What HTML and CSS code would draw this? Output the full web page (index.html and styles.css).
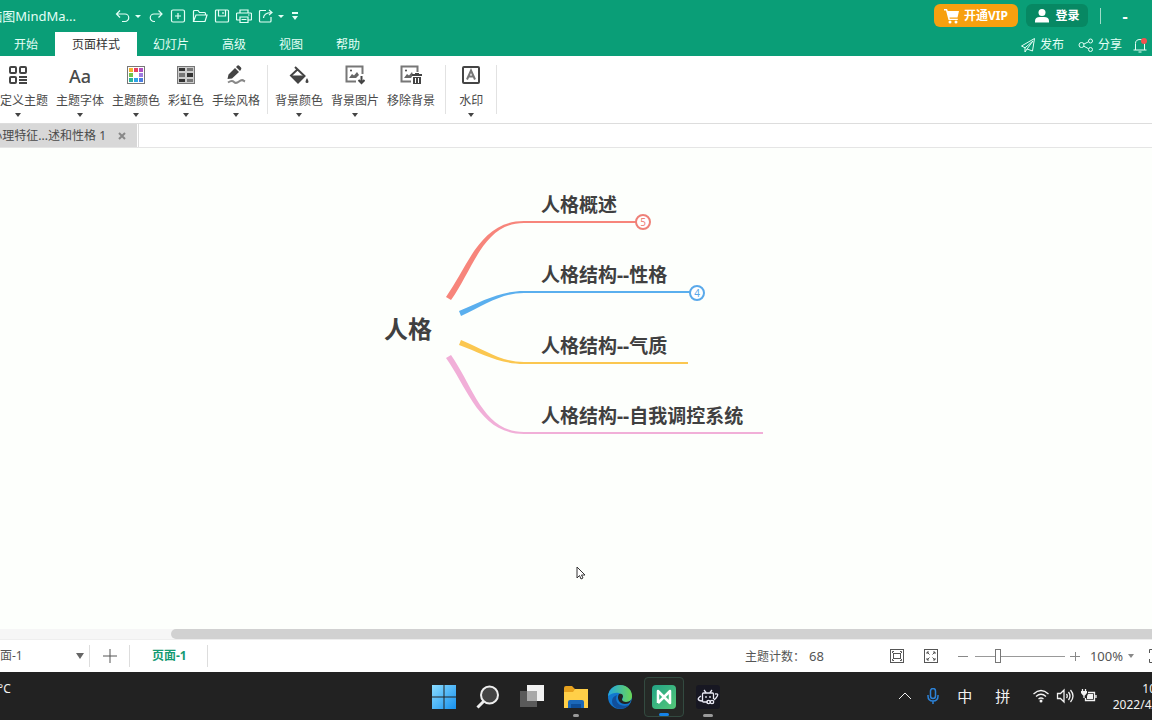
FILE: index.html
```html
<!DOCTYPE html>
<html lang="zh-CN">
<head>
<meta charset="utf-8">
<title>MindMaster</title>
<link rel="stylesheet" href="styles.css">
</head>
<body>
<header class="header">
  <div class="titlebar">
    <div class="app-title"><span>脑图MindMa...</span></div>
    <div class="quick">
      <button aria-label="撤销"><svg class="i16" viewBox="0 0 16 16"><path d="M5 2.500 1.500 6 5 9.500M1.500 6H10a3.500 3.500 0 0 1 0 7.500H7"/></svg></button>
      <button class="drop" aria-label="撤销列表"><svg class="caret" viewBox="0 0 8 8"><path d="M1 3h6L4 6z"/></svg></button>
      <button aria-label="重做"><svg class="i16" viewBox="0 0 16 16"><path d="M10.500 2.500 14 6l-3.500 3.500M14 6H6a3.500 3.500 0 0 0 0 7.500h1"/></svg></button>
      <button aria-label="新建"><svg class="i16" viewBox="0 0 16 16"><rect x="1.500" y="2" width="13" height="12" rx="1.500"/><path d="M8 5v6M5 8h6"/></svg></button>
      <button aria-label="打开"><svg class="i16" viewBox="0 0 16 16"><path d="M1.500 13.500v-10q0-1 1-1h3.500l1.500 2h5q1 0 1 1V7M1.500 13.500 4 7h11l-2 6.500z"/></svg></button>
      <button aria-label="保存"><svg class="i16" viewBox="0 0 16 16"><rect x="1.500" y="2" width="13" height="12" rx="1"/><path d="M4.500 2v6h7V2M9 4v2"/></svg></button>
      <button aria-label="打印"><svg class="i16" viewBox="0 0 16 16"><path d="M4 5V2h8v3M4 12H1.500q-1 0-1-1V6q0-1 1-1h13q1 0 1 1v5q0 1-1 1H12M4 9h8v5.500H4zM5.500 11.500h5M12 7h1.500"/></svg></button>
      <button aria-label="导出"><svg class="i16" viewBox="0 0 16 16"><path d="M8 2.500H2.500q-1 0-1 1v9.500q0 1 1 1H12q1 0 1-1V9M5.500 10q0-5 8-5.500M11 2l3 2.500L11 7"/></svg></button>
      <button class="drop" aria-label="导出列表"><svg class="caret" viewBox="0 0 8 8"><path d="M1 3h6L4 6z"/></svg></button>
      <button aria-label="更多"><svg class="caret" viewBox="0 0 8 8"><path d="M1 0h6v2H1zM1 4h6L4 8z"/></svg></button>
    </div>
    <div class="account">
      <button class="vip"><svg class="i16 solid" viewBox="0 0 16 16"><path d="M0 1h3l.8 2H15l-1.500 6.500H5.500l.3 1.200h8V12H4.500L2 2.500H0z"/><circle cx="6" cy="14" r="1.500"/><circle cx="12" cy="14" r="1.500"/></svg>开通VIP</button>
      <button class="login"><svg class="i16 solid" viewBox="0 0 16 16"><circle cx="8" cy="4.500" r="3.500"/><path d="M1 14.500V13q0-4 5-4h4q5 0 5 4v1.500z"/></svg>登录</button>
      <span class="bar"></span>
      <button class="min" aria-label="最小化">-</button>
    </div>
  </div>
  <div class="menubar">
    <nav class="menu">
      <button>开始</button><button class="active">页面样式</button><button>幻灯片</button><button>高级</button><button>视图</button><button>帮助</button>
    </nav>
    <div class="share">
      <button><svg class="i16" viewBox="0 0 16 16"><path d="M14.500 1.500 1.500 9l3.500 1.800L13 4 7 12l5.500 2zM5 10.800V15l2-3"/></svg>发布</button>
      <button><svg class="i16" viewBox="0 0 16 16"><circle cx="3.500" cy="8" r="2.500"/><circle cx="12.500" cy="4" r="2"/><circle cx="12.500" cy="12.500" r="2"/><path d="m6 7 4.500-2.200M6 9.300l4.500 2.400"/></svg>分享</button>
      <button class="bell" aria-label="通知"><svg class="i16" viewBox="0 0 16 16"><path d="M1.500 13h13M3.500 13V6.500Q3.500 2.500 8 2.500t4.500 4V13M6.500 15h3"/><circle class="dot" cx="12" cy="4" r="3"/></svg></button>
    </div>
  </div>
</header>

<div class="ribbon">
  <div class="group first">
    <button><svg class="i20" viewBox="0 0 20 20"><g class="ln"><rect x="2" y="2" width="6" height="6" rx="1"/><rect x="12" y="2" width="6" height="6" rx="1"/><rect x="2" y="12" width="6" height="6" rx="1"/><path d="M11 12h8M11 15h8M11 18h8"/></g></svg><span>自定义主题</span><svg class="caret" viewBox="0 0 8 8"><path d="M1 2h6L4 6z"/></svg></button>
    <button><b class="aa">Aa</b><span>主题字体</span><svg class="caret" viewBox="0 0 8 8"><path d="M1 2h6L4 6z"/></svg></button>
    <button><svg class="i20" viewBox="0 0 20 20"><rect class="thin" x="1.500" y="1.500" width="17" height="17"/><path fill="#f5b32e" d="M3 3h4v4H3z"/><path fill="#e8415f" d="M8 3h4v4H8z"/><path fill="#b04fc0" d="M13 3h4v4h-4z"/><path fill="#73c34c" d="M3 8h4v4H3z"/><path fill="#9c7ce0" d="M13 8h4v4h-4z"/><path fill="#29b39c" d="M3 13h4v4H3z"/><path fill="#2ea5e8" d="M8 13h4v4H8z"/><path fill="#4a7de0" d="M13 13h4v4h-4z"/></svg><span>主题颜色</span><svg class="caret" viewBox="0 0 8 8"><path d="M1 2h6L4 6z"/></svg></button>
    <button><svg class="i20" viewBox="0 0 20 20"><rect fill="#ccc" x="1" y="1" width="18" height="18"/><rect class="thin" x="1.500" y="1.500" width="17" height="17"/><path fill="#333" d="M3 3h6v3H3zM11 8h6v4h-6zM3 14h6v3H3z"/><path fill="#777" d="M11 3h6v3h-6zM3 8h6v4H3zM11 14h6v3h-6z"/></svg><span>彩虹色</span><svg class="caret" viewBox="0 0 8 8"><path d="M1 2h6L4 6z"/></svg></button>
    <button><svg class="i20" viewBox="0 0 20 20"><path d="m1.500 14 1-4.500L9 3l4 4-7 6.500zM10 2l1.500-1.500q1-.5 2 .5L15 2.500q.8 1 0 2L14 6z"/><path class="wave" d="M2 17.500q4-2.500 6-.5t5-.5 5-.5l1 .5"/></svg><span>手绘风格</span><svg class="caret" viewBox="0 0 8 8"><path d="M1 2h6L4 6z"/></svg></button>
  </div>
  <div class="group">
    <button><svg class="i20" viewBox="0 0 20 20"><path class="ln" d="m6 2 9.500 9L9 17.500 2 10.500 9 4"/><path d="M2 10.500h13.500L9 18zM18 13q3 5 0 5t0-5z"/></svg><span>背景颜色</span><svg class="caret" viewBox="0 0 8 8"><path d="M1 2h6L4 6z"/></svg></button>
    <button><svg class="i20" viewBox="0 0 20 20"><path class="pic" d="M11 16.500H1.500v-15h16V9"/><path fill="#666" d="m4 13 3-4 2 1.500L12 7l2 3-3 3z"/><circle cx="6" cy="5.500" r="1"/><path class="ln" d="M16.500 11v7M13.500 15l3 3 3-3"/></svg><span>背景图片</span><svg class="caret" viewBox="0 0 8 8"><path d="M1 2h6L4 6z"/></svg></button>
    <button><svg class="i22" viewBox="0 0 22 20"><path class="pic" d="M11 16.500H1.500v-15h16V7"/><path fill="#666" d="m4 13 3-4 2 1.500L12 7l1 3-2 3z"/><circle cx="6" cy="5.500" r="1"/><path d="M12 9h3V8h4v1h3v2H12zM13 12h8v7h-8z"/><path stroke="#fff" d="M15.500 13v5M18.500 13v5"/></svg><span>移除背景</span></button>
  </div>
  <div class="group">
    <button class="water"><svg class="i20" viewBox="0 0 20 20"><rect class="ln" x="2" y="2" width="16" height="16" rx="1"/><path class="letter" d="m6 14.500 4-9 4 9M7.500 11.500h5"/></svg><span>水印</span><svg class="caret" viewBox="0 0 8 8"><path d="M1 2h6L4 6z"/></svg></button>
  </div>
</div>

<div class="doctabs">
  <div class="doctab"><span>心理特征...述和性格 1</span><button aria-label="关闭"><svg viewBox="0 0 8 8"><path d="m1 1 6 6M7 1 1 7"/></svg></button></div>
</div>

<main class="canvas">
  <svg class="links" width="800" height="480" viewBox="0 148 800 480">
    <path fill="#f7857b" d="M446 297C468 266 480 221 524 221H636V223H524C483 223 473 270 451 300Z"/>
    <path fill="#5aafee" d="M459 311C481 302 499 291 524 291H690V293H524C501 293 485 305 461 316Z"/>
    <path fill="#fbc750" d="M461 340C485 350 501 362 524 362H688V364H524C499 364 481 353 459 345Z"/>
    <path fill="#f1afd8" d="M451 355C473 386 483 432 524 432H763V434H524C480 434 468 389 446 358Z"/>
  </svg>
  <div class="root">人格</div>
  <div class="topic t1">人格概述</div>
  <div class="topic t2">人格结构--性格</div>
  <div class="topic t3">人格结构--气质</div>
  <div class="topic t4">人格结构--自我调控系统</div>
  <button class="count c1">5</button>
  <button class="count c2">4</button>
  <svg class="cursor" viewBox="0 0 10 14"><path d="M1 1v11l2.500-2.500 1.500 3.500 2-1-1.500-3H9z"/></svg>
</main>
<div class="scroll"><div class="thumb"></div></div>

<div class="status">
  <div class="pages">
    <label class="picker"><select aria-label="页面"><option>页面-1</option></select><svg viewBox="0 0 10 6"><path d="M1 0h8L5 6z"/></svg></label>
    <button class="add" aria-label="添加页面"><svg viewBox="0 0 14 14"><path d="M7 0v14M0 7h14"/></svg></button>
    <button class="page">页面-1</button>
  </div>
  <div class="tools">
    <span class="total">主题计数：<span class="num">68</span></span>
    <button aria-label="适应窗口"><svg class="i16" viewBox="0 0 16 16"><rect x="1.500" y="1.500" width="13" height="13"/><rect x="4.500" y="5.500" width="7" height="5"/><path d="M3.500 5V3.500H5M11 3.500h1.500V5M12.500 11v1.500H11M5 12.500H3.500V11"/></svg></button>
    <button class="full" aria-label="全屏"><svg class="i16" viewBox="0 0 16 16"><rect x="1.500" y="1.500" width="13" height="13"/><path d="m4 4 2.500 2.500M4 6V4h2M12 4 9.500 6.500M10 4h2v2M4 12l2.500-2.500M4 10v2h2M12 12 9.500 9.500M12 10v2h-2"/></svg></button>
    <button class="step" aria-label="缩小"><svg class="i10" viewBox="0 0 10 10"><path d="M0 5.500h10"/></svg></button>
    <input type="range" min="0" max="100" value="24" aria-label="缩放">
    <button class="step" aria-label="放大"><svg class="i10" viewBox="0 0 10 10"><path d="M0 5.500h10M5.500 1v9"/></svg></button>
    <button class="zoom">100%<svg class="caret" viewBox="0 0 8 8"><path d="M1 2h6L4 6z"/></svg></button>
    <button class="cut" aria-label="全屏显示"><svg class="i16" viewBox="0 0 16 16"><path d="M1.500 5V1.500H5M11 1.500h3.500V5M14.500 11v3.500H11M5 14.500H1.500V11M4.500 5v6"/></svg></button>
  </div>
</div>

<footer class="taskbar">
  <div class="weather">°C</div>
  <div class="apps">
    <button aria-label="开始菜单"><svg viewBox="0 0 24 24"><defs><linearGradient id="win" x1="0" y1="0" x2="1" y2="1"><stop offset="0" stop-color="#8adcff"/><stop offset="1" stop-color="#1690ee"/></linearGradient></defs><path fill="url(#win)" d="M0 0h11.500v11.500H0zM12.500 0H24v11.500H12.500zM0 12.500h11.500V24H0zM12.500 12.500H24V24H12.500z"/></svg></button>
    <button aria-label="搜索"><svg viewBox="0 0 24 24"><circle cx="13.500" cy="10" r="8.500" fill="#444" stroke="#eee" stroke-width="2"/><path d="m7.500 16.500-6 6" stroke="#eee" stroke-width="3"/></svg></button>
    <button aria-label="任务视图"><svg viewBox="0 0 24 24"><path fill="#f2f2f2" d="M7 0h17v16H7z"/><path fill="#5a5a5a" d="M0 6h17v16H0z"/><path fill="#a9a9a9" d="M7 6h10v10H7z"/></svg></button>
    <button class="run" aria-label="文件资源管理器"><svg viewBox="0 0 24 24"><path fill="#e6a11e" d="M0 3q0-2 2-2h6l3 3h13v6H0z"/><path fill="#ffcf48" d="M0 7h9l2-3h13v19H0z"/><path fill="#1b68b8" d="M4 23v-6q0-2 2-2h12q2 0 2 2v6z"/><path fill="#0e4d96" d="M7 19h10v4H7z"/></svg></button>
    <button aria-label="Edge"><svg viewBox="0 0 24 24"><defs><linearGradient id="sea" x1="0" y1="0" x2="1" y2="0"><stop offset="0" stop-color="#22a6e2"/><stop offset="1" stop-color="#6bd653"/></linearGradient></defs><circle cx="12" cy="12" r="12" fill="#1277cf"/><path fill="url(#sea)" d="M0 11C1 4 6 0 12 0c8 0 12 6 12 11 0 4-3 6-6 6-4 0-5-2-3-4C15 8 8 5 0 11z"/><path fill="#114f9b" d="M9 10c-3 6 2 13 12 10-5 6-17 5-17-4 0-3 2-5 5-6z"/><path fill="#222" d="M11 9q4-1 4 3c-2 2-1 5 3 5 2 0 4-1 5-2-1 3-3 4-6 4-5 0-9-5-6-10z"/></svg></button>
    <button class="run current" aria-label="MindMaster"><svg viewBox="0 0 24 24"><defs><linearGradient id="mm" x1="0" y1="0" x2="1" y2="1"><stop offset="0" stop-color="#22a386"/><stop offset="1" stop-color="#55c878"/></linearGradient></defs><rect width="24" height="24" rx="4" fill="url(#mm)"/><path fill="none" stroke="#fff" stroke-width="2.500" stroke-linejoin="round" d="M6 18V6l12 12V6L6 18"/></svg></button>
    <button class="run other" aria-label="录屏"><svg viewBox="0 0 24 24"><rect width="24" height="24" rx="3" fill="#171722"/><g fill="none" stroke="#e8e8f4" stroke-width="1.300"><path d="m8 5 2 2.500M16 5l-2 2.500M12 17H7.500q-1 0-1-1V9q0-1 1-1h9q1 0 1 1v5M10 11v2M14 11v2M5 11q-6 4 1 5M19 9q5-1 1 4l-2 2"/><circle cx="12.500" cy="17" r="1.700"/><circle cx="16" cy="17" r="1.700"/></g></svg></button>
  </div>
  <div class="tray">
    <button aria-label="隐藏的图标"><svg class="i16" viewBox="0 0 16 16"><path d="m2 11 6-6 6 6"/></svg></button>
    <button class="mic" aria-label="麦克风"><svg class="i16" viewBox="0 0 16 16"><rect x="5.500" y="0.500" width="5" height="10" rx="2.500"/><path d="M3 7v1q0 5 5 5t5-5V7M8 13v3"/></svg></button>
    <button class="ime">中</button>
    <button class="ime">拼</button>
    <button class="sys" aria-label="网络、音量和电池"><svg class="i16" viewBox="0 0 16 16"><path d="M.5 6q7.500-7 15 0M3 8.500q5-4.500 10 0M5.500 11q2.500-2 5 0"/><circle class="w" cx="8" cy="13" r="1.500"/></svg><svg class="i18" viewBox="0 0 18 16"><path d="M1.500 5.500h3L8 2v12l-3.500-3.500h-3zM10.500 6q1.500 2 0 4M12.500 4q3 4 0 8M14.500 2q5 6 0 12"/></svg><svg class="i16" viewBox="0 0 16 16"><path d="M7 4.500h6.500v8h-9V10M15 7v3M1.500 1v3M4.500 1v3M3 7v3"/><path class="w" d="M0 3h6v2L4 7.500H2L0 5zM7 6h5v5H6V8z"/></svg></button>
    <button class="clock"><span>10</span><span>2022/4/</span></button>
  </div>
</footer>
</body>
</html>
```

FILE: styles.css
```css
* { box-sizing: border-box; }
body {
  margin: 0;
  height: 100vh;
  display: flex;
  flex-direction: column;
  overflow: hidden;
  background: #fff;
  color: #4a4a4a;
  font: 12px/16px "Noto Sans", "Noto Sans CJK SC", sans-serif;
}
button, select {
  border: 0;
  margin: 0;
  padding: 0;
  background: none;
  color: inherit;
  font: inherit;
  white-space: nowrap;
}
button { display: flex; align-items: center; justify-content: center; flex: none; }
svg { display: block; flex: none; }
.i16 { width: 16px; height: 16px; fill: none; stroke: currentColor; }
.i18 { width: 18px; height: 16px; fill: none; stroke: currentColor; }
.i10 { width: 10px; height: 10px; fill: none; stroke: currentColor; }
.i20 { width: 20px; height: 20px; }
.i22 { width: 22px; height: 20px; }
.solid { fill: #fff; stroke: none; }
.caret { width: 8px; height: 8px; fill: currentColor; }

/* header */
.header { background: #0a9e77; color: #e4fff6; }
.titlebar { display: flex; align-items: center; height: 32px; padding-bottom: 1px; }
.app-title { width: 76px; display: flex; justify-content: flex-end; overflow: hidden; font-size: 13px; white-space: nowrap; }
.quick { display: flex; align-items: center; gap: 6px; margin-left: 39px; }
.quick svg { stroke-width: 1.2; }
.quick .drop { margin-left: -3px; }
.account { display: flex; align-items: center; margin-left: auto; padding-right: 23px; color: #fff; font-weight: 700; }
.vip { width: 84px; height: 23px; gap: 4px; border-radius: 6px; background: #f7a00f; }
.login { width: 62px; height: 23px; gap: 5px; margin-left: 8px; border-radius: 6px; background: #078863; }
.bar { width: 1px; height: 16px; margin: 0 20px 0 12px; background: #9fdcc9; }
.min { width: 8px; font-size: 16px; }
.menubar { display: flex; justify-content: space-between; height: 24px; }
.menubar button { padding-top: 2px; }
.menu { display: flex; margin-left: -2px; }
.menu button { padding-left: 16px; padding-right: 17px; }
.menu .active { padding-left: 17px; background: #fff; color: #333; }
.share { display: flex; gap: 14px; padding-right: 4px; }
.share button { gap: 4px; }
.share .bell { margin-left: -4px; }
.dot { fill: #f0524f; stroke: none; }

/* ribbon */
.ribbon { display: flex; height: 68px; padding: 9px 0; border-bottom: 1px solid #ddd; }
.group { display: flex; border-right: 1px solid #e2e2e2; padding: 0 3px; }
.first { margin-left: -19px; }
.group button { flex-direction: column; justify-content: flex-start; padding: 0 4px; }
.group span { margin: 8px 0 2px; }
.group:nth-child(2) { padding-right: 6px; }
.group svg { fill: #444; }
.group .ln { fill: none; stroke: #444; stroke-width: 2; }
.thin { fill: none; stroke: #777; }
.group .pic { fill: none; stroke: #777; stroke-width: 2; }
.wave { fill: none; stroke: #888; stroke-width: 2; }
.letter { fill: none; stroke: #777; stroke-width: 2; }
.aa { height: 20px; font-size: 18px; line-height: 22px; font-weight: 500; }
.group .water { padding: 0 10px; }

/* document tabs */
.doctabs { display: flex; height: 24px; border-bottom: 1px solid #e5e5e5; }
.doctab { width: 138px; display: flex; align-items: center; justify-content: flex-end; gap: 12px; padding-right: 11px; background: #d8d8d8; border-right: 1px solid #fff; box-shadow: 1px 0 #ddd; white-space: nowrap; }
.doctab svg { width: 8px; height: 8px; stroke: #888; stroke-width: 2; }

/* mind map */
.canvas { position: relative; flex: 1; min-height: 0; overflow: hidden; background: #fdfffc; }
.links { position: absolute; left: 0; top: 0; }
.root, .topic { position: absolute; color: #404040; font-weight: 700; white-space: nowrap; }
.root { left: 384px; top: 165px; font-size: 24px; line-height: 32px; }
.topic { left: 541px; font-size: 19px; line-height: 28px; }
.t1 { top: 43px; }
.t2 { top: 113px; }
.t3 { top: 184px; }
.t4 { top: 254px; }
.count { position: absolute; width: 16px; height: 16px; border: 2px solid; border-radius: 50%; background: #fff; font-size: 10px; line-height: 12px; }
.c1 { left: 635px; top: 66px; color: #ee8178; }
.c2 { left: 689px; top: 137px; color: #5aa9ea; }
.cursor { position: absolute; left: 576px; top: 418px; width: 10px; height: 14px; fill: #fff; stroke: #333; }
.scroll { height: 10px; padding-left: 171px; background: #f6f6f6; }
.thumb { height: 10px; border-radius: 5px 0 0 5px; background: #d1d1d1; }

/* status bar */
.status { display: flex; align-items: center; justify-content: space-between; height: 33px; border-top: 1px solid #eee; color: #555; }
.pages { display: flex; align-items: center; height: 22px; }
.pages > * { height: 22px; border-right: 1px solid #ddd; }
.picker { display: flex; align-items: center; width: 90px; padding-right: 4px; }
.picker select { appearance: none; flex: 1; min-width: 0; margin-left: -12px; }
.picker svg { width: 10px; height: 6px; fill: #666; }
.add { width: 40px; }
.add svg { width: 14px; height: 14px; stroke: #555; }
.page { padding: 0 20px 0 22px; color: #139a72; font-weight: 700; }
.tools { display: flex; align-items: center; }
.total { margin-right: 65px; }
.num { margin-left: 4px; font-size: 13px; }
.full { margin: 0 19px 0 18px; }
.step { color: #888; }
.tools input { appearance: none; width: 90px; height: 16px; margin: 0 5px 0 7px; background: linear-gradient(#999, #999) center / 100% 1px no-repeat; }
.tools input::-webkit-slider-thumb { appearance: none; width: 6px; height: 14px; border: 1px solid #777; background: #fff; }
.zoom { gap: 4px; margin-left: 10px; font-size: 13px; }
.zoom .caret { color: #888; }
.cut { margin: 0 -12px 0 13px; }

/* taskbar */
.taskbar { display: grid; grid-template-columns: 1fr auto 1fr; height: 48px; background: #222; color: #f2f2f2; }
.weather { margin-left: -2px; padding-top: 9px; }
.apps { display: flex; align-items: center; gap: 4px; padding-top: 2px; }
.apps button { position: relative; width: 40px; height: 40px; border-radius: 4px; }
.apps svg { width: 24px; height: 24px; fill: none; }
.run::after { content: ""; position: absolute; left: 17px; bottom: 0; width: 6px; height: 3px; border-radius: 2px; background: #9a9a9a; }
.apps .current { border: 1px solid #334a40; background: #252926; }
.current::after { left: 14px; width: 10px; background: #1683e8; }
.other::after { left: 15px; width: 10px; }
.tray { display: flex; align-items: center; justify-content: flex-end; min-width: 0; }
.mic { margin: 0 16px 0 12px; color: #2c82d8; }
.mic svg { stroke-width: 1.5; }
.ime { width: 16px; margin-right: 22px; font-size: 15px; }
.sys { gap: 7px; }
.sys svg { stroke-width: 1.3; }
.w { fill: currentColor; stroke: none; }
.clock { flex-direction: column; align-items: flex-end; margin: 0 -4px 0 16px; padding-top: 1px; }
```
